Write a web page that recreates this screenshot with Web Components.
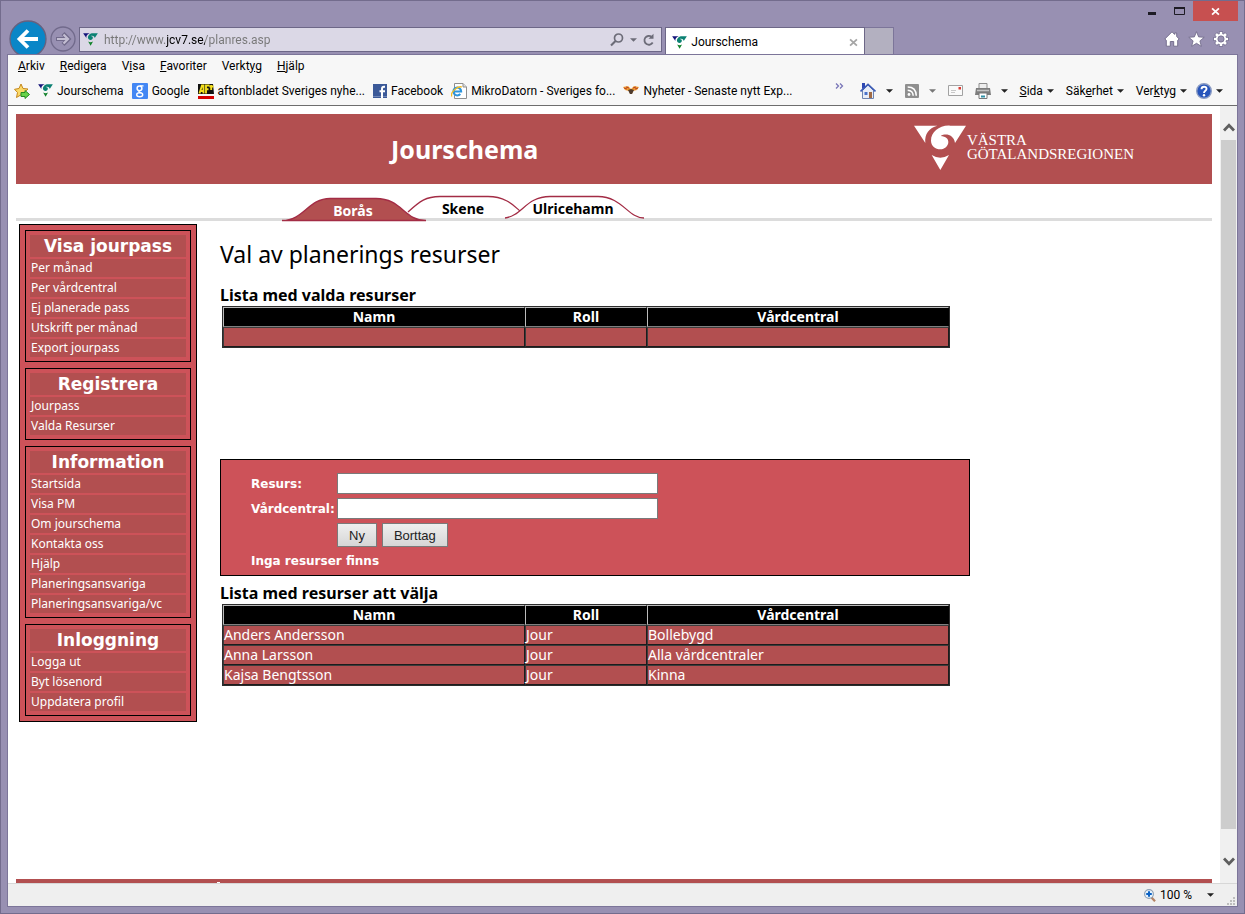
<!DOCTYPE html>
<html lang="sv">
<head>
<meta charset="utf-8">
<meta name="viewport" content="width=device-width, initial-scale=1">
<title>Jourschema</title>
<style>
  html, body { height: 100%; }
  body { margin: 0; font-family: Roboto, "Open Sans", sans-serif; font-size: 12px; color: #000; }
</style>
</head>
<body>
<browser-window>
  <window-controls slot="controls"></window-controls>
  <navigation-bar slot="nav"></navigation-bar>
  <menu-bar slot="bars"></menu-bar>
  <favorites-bar slot="bars"></favorites-bar>
  <page-view>
    <site-header></site-header>
    <site-tabs></site-tabs>
    <page-columns>
      <side-menu slot="side">
        <menu-group heading="Visa jourpass" items="Per månad|Per vårdcentral|Ej planerade pass|Utskrift per månad|Export jourpass"></menu-group>
        <menu-group heading="Registrera" items="Jourpass|Valda Resurser"></menu-group>
        <menu-group heading="Information" items="Startsida|Visa PM|Om jourschema|Kontakta oss|Hjälp|Planeringsansvariga|Planeringsansvariga/vc"></menu-group>
        <menu-group heading="Inloggning" items="Logga ut|Byt lösenord|Uppdatera profil"></menu-group>
      </side-menu>
      <page-title>Val av planerings resurser</page-title>
      <resource-table class="chosen" heading="Lista med valda resurser" rows="||"></resource-table>
      <resource-form></resource-form>
      <resource-table heading="Lista med resurser att välja" rows="Anders Andersson|Jour|Bollebygd;Anna Larsson|Jour|Alla vårdcentraler;Kajsa Bengtsson|Jour|Kinna"></resource-table>
    </page-columns>
    <site-footer></site-footer>
  </page-view>
  <status-bar slot="status"></status-bar>
</browser-window>

<script>
const define = (name, render) => customElements.define(name, class extends HTMLElement {
  constructor() { super(); this.attachShadow({ mode: 'open' }); }
  connectedCallback() { this.shadowRoot.innerHTML = render(this); }
});

const ICONS = {
  region: ['0 0 156 138', '<path fill="var(--left,#fff)" d="M0 2H70C46 8 31 26 34 54Z"/><path fill="var(--right,#fff)" d="M156 2H108C76 0 51 22 51 47C51 62 64 73 79 73C92 73 103 63 103 51C103 42 96 34 80 33C95 24 119 29 123 54Z"/><path fill="var(--tip,#fff)" d="M53 90Q79 106 105 90L79 135Z"/>'],
  back: ['0 0 38 38', '<circle cx="19" cy="19" r="18" fill="#0a86c7" stroke="#66617f" stroke-width="1.3"/><path d="M29 19H12M19 10.500L10.500 19L19 27.500" fill="none" stroke="#fff" stroke-width="3.800"/>'],
  forward: ['0 0 26 26', '<circle cx="13" cy="13" r="12" fill="none" stroke="#716a8b" stroke-width="1.300"/><path d="M6 13H18M13 7.500L18.500 13L13 18.500" fill="none" stroke="#716a8b" stroke-width="4.200"/><path d="M7 13H17.500M13.500 8.500L18 13L13.500 17.500" fill="none" stroke="#c3bed2" stroke-width="2.200"/>'],
  search: ['0 0 14 14', '<circle cx="8.500" cy="5" r="4" fill="none" stroke="#6c6c78" stroke-width="1.700"/><path d="M5.500 8L1 12.500" stroke="#6c6c78" stroke-width="2.200"/>'],
  reload: ['0 0 12 14', '<path d="M9.700 9.500A4.400 4.400 0 1 1 8.500 3.800" fill="none" stroke="#6c6c78" stroke-width="1.800"/><path d="M5.500 5.800H10.500V.800Z" fill="#6c6c78"/>'],
  caret: ['0 0 8 4', '<path d="M0 0H8L4 4Z" fill="var(--caret,#222)"/>'],
  cross: ['0 0 10 10', '<path d="M1.200 1.500L8.800 8.500M8.800 1.500L1.200 8.500" stroke="currentColor" stroke-width="2" fill="none"/>'],
  min: ['0 0 9 9', '<path d="M0 6.500H8" stroke="#1d1b24" stroke-width="3"/>'],
  max: ['0 0 11 9', '<path d="M.5 1H10.500V7.500H.500Z" fill="none" stroke="#1d1b24"/><path d="M0 1H11" stroke="#1d1b24" stroke-width="2"/>'],
  home: ['0 0 16 16', '<path d="M8 .800L.800 8L2.300 9.300V15.200H6.300V10.500H9.700V15.200H13.700V9.300L15.200 8L12.700 5.500V2H10.700V3.500Z" fill="#fff" stroke="#6d6787" stroke-width=".9"/>'],
  star: ['0 0 17 16', '<path d="M8.500 .700L10.600 5.900L16.200 6.300L11.900 9.900L13.300 15.300L8.500 12.300L3.700 15.300L5.100 9.900L.800 6.300L6.400 5.900Z" fill="#fff" stroke="#6d6787" stroke-width=".8"/>'],
  gear: ['0 0 16 16', '<g stroke="#6d6787" stroke-width="4"><path d="M8 .500V15.500M.500 8H15.500M2.700 2.700L13.300 13.300M13.300 2.700L2.700 13.300"/></g><g stroke="#fff" stroke-width="2.600"><path d="M8 1V15M1 8H15M3 3L13 13M13 3L3 13"/></g><circle cx="8" cy="8" r="4.200" fill="#9890b2" stroke="#fff" stroke-width="2"/><circle cx="8" cy="8" r="3.100" fill="#9890b2" stroke="#6d6787" stroke-width=".7"/>'],
  addfav: ['0 0 16 16', '<path d="M7 1L9 5.500L14 6L10.500 9.500L11.500 14L7 11.800L2.500 14.500L3.500 9.500L.500 6.300L5 5.500Z" fill="#fbd968" stroke="#c4861b"/><path d="M7 9.500H11V7.500L15.500 11.500L11 15.500V13.500H7Z" fill="#68d34a" stroke="#258b22"/>'],
  google: ['0 0 16 16', '<rect width="16" height="16" rx="1" fill="#4387f4"/><circle cx="7.500" cy="5.300" r="2.400" fill="none" stroke="#fff" stroke-width="1.500"/><ellipse cx="7.700" cy="11.700" rx="3" ry="2" fill="none" stroke="#fff" stroke-width="1.400"/><path d="M8 2.800H11.500M7.500 7.700C6 8.500 7.500 9.300 9.500 10" fill="none" stroke="#fff" stroke-width="1.300"/>'],
  afton: ['0 0 16 16', '<path fill="#111" d="M0 1H15L16 11H0Z"/><path fill="none" stroke="#f4df1d" stroke-width="1.900" d="M1.500 10.500L4 2.500H5.500V10.500M2.500 8H5.500M8 10.500V2.500H11.500M8 6.300H10.500M13.200 2V7M11.500 3.500H15.500"/><path fill="#d50000" d="M0 13H16V16H0Z"/>'],
  face: ['0 0 14 14', '<path fill="#3b5998" d="M0 0H14V14H0Z"/><path fill="#6f86b7" d="M0 12H14V13H0Z"/><path d="M12 2.700H11Q9 2.700 9 5V14M6.500 7.300H12" fill="none" stroke="#fff" stroke-width="2"/>'],
  iepage: ['0 0 16 16', '<path d="M3.500 .5H12L15.500 4V15.500H3.500Z" fill="#fff" stroke="#8f8f8f"/><path d="M12 .5V4H15.500" fill="#ddd" stroke="#8f8f8f"/><path d="M3 8.500H10.200A3.900 3.900 0 1 0 9.300 11" fill="none" stroke="#2b94dd" stroke-width="2"/><path d="M.8 13.500C-1 10 6 2.500 11 4" fill="none" stroke="#f3bc23" stroke-width="1.300"/>'],
  wasp: ['0 0 16 9', '<path d="M0 1L5 0L8 3L11 0L16 1L14 4L10 5L9 8H7L6 5L2 4Z" fill="#f09a30"/><path d="M1 2L4 3M3 1L6 2M10 2L13 1M12 3L15 2" fill="none" stroke="#b5472a"/><path d="M5 4L8 3L11 4L9 8H7Z" fill="#4f3b2c"/>'],
  house: ['0 0 16 16', '<path d="M2.500 7.500L8 2L13.500 7.500V15.500H2.500Z" fill="#e8edf7" stroke="#6d83b0"/><path d="M.500 8.500L8 1.500L15.500 8.500" fill="none" stroke="#3e5db6" stroke-width="1.700"/><path d="M2 0H5V4L2 6Z" fill="#2e48b3"/><path d="M4.500 9H7.500V12H4.500Z" fill="#4a72c9"/><path d="M9 9H12V15H9Z" fill="#a06a45"/>'],
  rss: ['0 0 14 14', '<rect width="14" height="14" rx="1" fill="#8f8f8f"/><circle cx="4" cy="10.500" r="1.400" fill="#fff"/><path d="M2.700 6.200Q8 6.500 8.200 11.700M2.700 3Q11 3 11.300 11.700" fill="none" stroke="#fff" stroke-width="1.500"/>'],
  mail: ['0 0 15 11', '<path d="M.5 .5H14.500V10.500H.500Z" fill="#fafafa" stroke="#a2a2a2"/><path d="M10.500 2H13V4.500H10.500Z" fill="#dc3b31"/><path d="M3 5.500H8M3 7.500H7" stroke="#c8c8c8"/>'],
  printer: ['0 0 16 16', '<path d="M4 .5H12V7H4Z" fill="#eee" stroke="#8d8d8d"/><path d="M1 5H15L16 12H0Z" fill="#7d7d7d"/><path d="M2 7.500H14" stroke="#c4c4c4" stroke-width="1.500"/><path d="M4 10H12V15.500H4Z" fill="#fff" stroke="#777"/><path d="M6 13.500H10" stroke="#2f8fa5" stroke-width="2"/>'],
  help: ['0 0 16 16', '<circle cx="8" cy="8" r="7.300" fill="#2755bb" stroke="#8b9cc4" stroke-width="1.400"/><path d="M5.500 6.200C5.500 2.800 10.800 3 10.500 6C10.300 7.800 8 7.700 8 10" fill="none" stroke="#fff" stroke-width="1.900"/><circle cx="8" cy="12.200" r="1.200" fill="#fff"/>'],
  chevrons: ['0 0 9 6', '<path d="M1 .500L3.500 3L1 5.500M5 .500L7.500 3L5 5.500" fill="none" stroke="#7a76b8" stroke-width="1.300"/>'],
  up: ['0 0 12 9', '<path d="M1 7.500L6 2.300L11 7.500" fill="none" stroke="#5e5e5e" stroke-width="2.800"/>'],
  down: ['0 0 12 9', '<path d="M1 1.500L6 6.700L11 1.500" fill="none" stroke="#5e5e5e" stroke-width="2.800"/>'],
  zoom: ['0 0 12 13', '<path d="M7.500 8.500L11 12.300" stroke="#b48163" stroke-width="2.200"/><circle cx="5" cy="5" r="4.400" fill="#e5f2fd" stroke="#8d9fb2" stroke-width="1.100"/><path d="M5 2.200V7.800M2.200 5H7.800" stroke="#0b62c4" stroke-width="2"/>'],
  grip: ['0 0 9 9', '<path d="M6 0H8V2H6ZM3 3H5V5H3ZM6 3H8V5H6ZM0 6H2V8H0ZM3 6H5V8H3ZM6 6H8V8H6Z" fill="#bdbdbd"/>']
};

customElements.define('ui-icon', class extends HTMLElement {
  constructor() { super(); this.attachShadow({ mode: 'open' }); }
  connectedCallback() {
    const [box, art] = ICONS[this.getAttribute('name')];
    const [, , w, h] = box.split(' ');
    const width = this.getAttribute('w') || w;
    const height = Math.round(width * h / w);
    this.shadowRoot.innerHTML = `<style>:host{display:inline-flex;flex:none}svg{display:block}</style>
      <svg width="${width}" height="${height}" viewBox="${box}" aria-hidden="true">${art}</svg>`;
  }
});

const RESET = `*,:host{box-sizing:border-box} button{font:inherit;color:inherit;background:none;border:0;padding:0;margin:0;display:inline-flex;align-items:center;white-space:nowrap} a{color:inherit;text-decoration:none}
  .fav{--left:#14147a;--right:#0b8173;--tip:#12822b}`;

define('browser-window', () => `<style>${RESET}
  :host{display:flex;flex-direction:column;height:100vh;min-height:600px;background:#9890b2;border:1px solid #736c8d;padding:0 6px 6px}
  .body{flex:1;min-height:0;display:flex;flex-direction:column;position:relative;z-index:1;background:#f7f7f7;border:1px solid #7c7599}
  </style><slot name="controls"></slot><slot name="nav"></slot>
  <div class="body"><slot name="bars"></slot><slot></slot><slot name="status"></slot></div>`);

define('window-controls', () => `<style>${RESET}
  :host{display:flex;justify-content:flex-end;height:20px;flex:none}
  button{justify-content:center;width:27px;height:20px}
  .close{width:45px;background:#c75050;color:#fff}
  </style><button aria-label="Minimera"><ui-icon name="min"></ui-icon></button><button aria-label="Maximera"><ui-icon name="max"></ui-icon></button><button class="close" aria-label="Stäng"><ui-icon name="cross" w="9"></ui-icon></button>`);

define('navigation-bar', () => `<style>${RESET}
  :host{display:flex;height:33px;flex:none;padding:0 9px 0 2px}
  .nav{display:flex;align-items:center;gap:3px;height:36px;margin-right:3px;flex:none}
  .address{flex:583 1 0;min-width:160px;display:flex;align-items:center;gap:6px;height:25px;margin:6px 3px 0 0;padding:0 6px 0 3px;background:#dbd8e6;border:1px solid #6d6787;--caret:#6c6c78}
  input{flex:1;min-width:0;border:0;padding:0;outline:0;font:12px/20px Roboto,sans-serif;color:#777;-webkit-text-fill-color:transparent;background:linear-gradient(90deg,#777 62px,#000 62px,#000 101px,#777 101px);-webkit-background-clip:text;background-clip:text}
  .tab{width:200px;flex:none;display:flex;align-items:center;gap:4px;margin-top:6px;padding:2px 6px 0;background:#fff;border:1px solid #6d6787;border-bottom:0}
  .tab span{flex:1}.tab button{color:#a5a5a5}
  .new{width:29px;flex:none;margin-top:6px;background:#b3b0c0;border:1px solid #7c7599;border-width:1px 1px 0 0}
  .tools{flex:341 1 0;display:flex;justify-content:flex-end;align-items:center;gap:8px;padding-top:2px}
  </style>
  <div class="nav"><button aria-label="Bakåt"><ui-icon name="back"></ui-icon></button><button aria-label="Framåt"><ui-icon name="forward"></ui-icon></button></div>
  <div class="address"><ui-icon class="fav" name="region" w="15"></ui-icon><input aria-label="Adress" value="http://www.jcv7.se/planres.asp">
    <button aria-label="Sök"><ui-icon name="search"></ui-icon></button><button aria-label="Visa förslag"><ui-icon name="caret" w="7"></ui-icon></button><button aria-label="Uppdatera"><ui-icon name="reload"></ui-icon></button></div>
  <div class="tab"><ui-icon class="fav" name="region" w="15"></ui-icon><span>Jourschema</span><button aria-label="Stäng flik"><ui-icon name="cross" w="9"></ui-icon></button></div>
  <button class="new" aria-label="Ny flik"></button>
  <div class="tools"><button aria-label="Start"><ui-icon name="home"></ui-icon></button><button aria-label="Favoriter"><ui-icon name="star"></ui-icon></button><button aria-label="Inställningar"><ui-icon name="gear"></ui-icon></button></div>`);

define('menu-bar', () => `<style>${RESET}
  :host{display:flex;gap:15px;height:21px;flex:none;padding:0 10px;align-items:center}
  </style><button><span><u>A</u>rkiv</span></button><button><span><u>R</u>edigera</span></button><button><span>V<u>i</u>sa</span></button><button><span><u>F</u>avoriter</span></button><button><span>Verkt<u>y</u>g</span></button><button><span><u>H</u>jälp</span></button>`);

define('favorites-bar', () => `<style>${RESET}
  :host{display:flex;height:30px;flex:none;padding:0 14px 0 6px;align-items:center;border-bottom:1px solid #6d6d6d;justify-content:space-between}
  div{display:flex;align-items:center}
  .links{gap:8px} a{display:flex;align-items:center;gap:4px;white-space:nowrap}
  .cmd,.menus{gap:12px} button{gap:4px} .wide{gap:10px}.tail{gap:9px}
  .more{align-self:flex-start;margin:0 4px 0 0}
  .off{--caret:#777}
  </style>
  <div class="links"><button aria-label="Lägg till i Favoriter"><ui-icon name="addfav"></ui-icon></button>
    <a href="#"><ui-icon class="fav" name="region" w="15"></ui-icon>Jourschema</a>
    <a href="#"><ui-icon name="google"></ui-icon>Google</a>
    <a href="#"><ui-icon name="afton"></ui-icon>aftonbladet Sveriges nyhe...</a>
    <a href="#"><ui-icon name="face"></ui-icon>Facebook</a>
    <a href="#"><ui-icon name="iepage"></ui-icon>MikroDatorn - Sveriges fo...</a>
    <a href="#"><ui-icon name="wasp"></ui-icon>Nyheter - Senaste nytt Exp...</a></div>
  <div class="cmd"><button class="more" aria-label="Fler favoriter"><ui-icon name="chevrons"></ui-icon></button>
    <button class="wide" aria-label="Startsida"><ui-icon name="house"></ui-icon><ui-icon name="caret" w="7"></ui-icon></button>
    <button class="wide off" aria-label="Feeds"><ui-icon name="rss"></ui-icon><ui-icon name="caret" w="7"></ui-icon></button>
    <button aria-label="Läs e-post"><ui-icon name="mail"></ui-icon></button>
    <button class="wide" aria-label="Skriv ut"><ui-icon name="printer"></ui-icon><ui-icon name="caret" w="7"></ui-icon></button>
    <div class="tail"><div class="menus">
      <button><span><u>S</u>ida</span><ui-icon name="caret" w="7"></ui-icon></button>
      <button><span>Säk<u>e</u>rhet</span><ui-icon name="caret" w="7"></ui-icon></button>
      <button><span>Ver<u>k</u>tyg</span><ui-icon name="caret" w="7"></ui-icon></button></div>
      <button aria-label="Hjälp"><ui-icon name="help"></ui-icon><ui-icon name="caret" w="7"></ui-icon></button></div></div>`);

define('page-view', () => `<style>${RESET}
  :host{display:flex;flex:1;min-height:0;background:#fff;font-family:"Noto Sans","Open Sans",sans-serif}
  .page{flex:1;min-width:0;overflow:hidden;display:flex;flex-direction:column;padding:8px 8px 0}
  .bar{width:17px;flex:none;background:#f0f0f0;display:flex;flex-direction:column;align-items:center;padding:17px 0}
  .track{flex:1;width:15px;margin:8px 0 28px;background:#cdcdcd}
  </style><div class="page"><slot></slot></div>
  <div class="bar"><ui-icon name="up"></ui-icon><div class="track"></div><ui-icon name="down"></ui-icon></div>`);

define('site-header', () => `<style>${RESET}
  :host{display:flex;justify-content:space-between;align-items:center;flex:none;height:70px;padding:0 78px 0 375px;background:#b24f50;color:#fff}
  h1{margin:0;font:bold 25px "Noto Sans",sans-serif}
  .logo{display:flex;gap:1px;font:15px/14px "Liberation Serif",serif;margin-bottom:3px}
  .logo span{padding-top:8px}
  </style><h1>Jourschema</h1><div class="logo"><ui-icon name="region" w="52"></ui-icon><span>VÄSTRA<br>GÖTALANDSREGIONEN</span></div>`);

define('site-tabs', () => `<style>${RESET}
  :host{display:block;position:relative;flex:none;height:37px;border-bottom:3px solid #dcdcdc}
  svg{position:absolute;left:264px;top:10px}
  nav{position:relative;display:grid;grid-template-columns:repeat(3,110px);margin-left:282px;padding-top:14px;font:bold 14px/22px "Noto Sans",sans-serif;text-align:center}
  .on{color:#fff;padding-top:2px}
  </style>
  <svg width="366" height="28" viewBox="0 0 366 28" aria-hidden="true"><g stroke="#a32c45" stroke-width="1.300">
    <path fill="#fff" stroke="none" d="M128 18C140 7 146 2.500 160 2.500H208C226 2.500 234 12 241 18L230 24H135Z"/>
    <path fill="none" d="M128 18C140 7 146 2.500 160 2.500H208C226 2.500 234 12 240 17"/>
    <path fill="#fff" d="M225 24C242 22 246 2.500 270 2.500H318C342 2.500 348 24 364 24"/>
    <path fill="#b24f50" d="M2 26.500C24 26.500 28 4.500 50 4.500H96C122 4.500 124 26.500 146 26.500Z"/></g></svg>
  <nav><a class="on" href="#">Borås</a><a href="#">Skene</a><a href="#">Ulricehamn</a></nav>`);

define('page-columns', () => `<style>${RESET}
  :host{display:flex;align-items:flex-start;gap:23px;flex:none;padding:3px 0 0 3px}
  main{flex:1;min-width:0}
  ::slotted(.chosen){min-height:175px}
  </style><slot name="side"></slot><main><slot></slot></main>`);

define('side-menu', () => `<style>
  :host{display:flex;flex-direction:column;gap:6px;box-sizing:border-box;width:178px;flex:none;padding:5px;background:#cd5259;border:1px solid #000}
  </style><slot></slot>`);

define('menu-group', el => `<style>${RESET}
  :host{display:grid;gap:2px;padding:4px;border:1px solid #000;color:#fff}
  h2{margin:0;background:#b24f50;font:bold 17px/22px "DejaVu Sans",sans-serif;text-align:center}
  a{display:block;padding-left:1px;background:#b24f50;font:12px/18px "Noto Sans",sans-serif}
  </style><h2>${el.getAttribute('heading')}</h2>${el.getAttribute('items').split('|').map(t => `<a href="#">${t}</a>`).join('')}`);

define('page-title', () => `<style>:host{display:block}h1{margin:0;padding:14px 0;font:23px/32px "Noto Sans",sans-serif}</style><h1><slot></slot></h1>`);

define('resource-table', el => `<style>${RESET}
  :host{display:block}
  h2{margin:0;font:bold 16px/22px "Noto Sans",sans-serif}
  table{width:728px;max-width:100%;margin:0 0 0 2px;border:1px solid #2c2c2c;border-spacing:0;table-layout:fixed}
  th,td{height:20px;padding:0;border:1px solid;font-size:14px;line-height:18px}
  th{background:#000;color:#fff;border-color:#bbb #000 #808080 #bbb}
  td{background:#b24f50;color:#fff;border-color:#3c3c3c #1c1c1c #1c1c1c #3c3c3c}
  .role{width:122px}
  </style><h2>${el.getAttribute('heading')}</h2>
  <table><thead><tr><th scope="col">Namn</th><th scope="col" class="role">Roll</th><th scope="col">Vårdcentral</th></tr></thead>
  <tbody>${el.getAttribute('rows').split(';').map(r => `<tr>${r.split('|').map(c => `<td>${c}</td>`).join('')}</tr>`).join('')}</tbody></table>`);

define('resource-form', () => `<style>${RESET}
  :host{display:block}
  form{width:750px;max-width:100%;margin:0 0 6px;padding:13px 30px 4px;display:grid;grid-template-columns:83px 321px;column-gap:3px;row-gap:4px;align-items:center;background:#cd5259;border:1px solid #000;color:#fff;font:bold 12px/20px "DejaVu Sans",sans-serif}
  label{white-space:nowrap}
  input{width:100%;height:21px;border:1px solid #7a7a7a;background:#fff;padding:0 2px}
  .actions{grid-column:2;display:flex;gap:5px}
  button{height:24px;padding:0 11px;font:13px "Liberation Sans",sans-serif;color:#222;background:linear-gradient(#efefef,#d6d6d6);border:1px solid #7a7a7a}
  p{grid-column:1/-1;margin:0}
  </style><form><label for="r">Resurs:</label><input id="r" type="text"><label for="v">Vårdcentral:</label><input id="v" type="text">
  <div class="actions"><button type="button">Ny</button><button type="button">Borttag</button></div><p>Inga resurser finns</p></form>`);

define('site-footer', () => `<style>
  :host{display:block;flex:none;height:4px;margin-top:auto;background:#b24f50}
  div{width:3px;margin-left:201px;padding-top:3px;border-bottom:1px solid #fff}
  </style><div></div>`);

define('status-bar', () => `<style>${RESET}
  :host{display:flex;justify-content:flex-end;align-items:center;flex:none;height:23px;padding:0 1px;background:#efefef;border-top:1px solid #d7d7d7}
  button{gap:4px}.arrow{margin:0 13px 0 15px}ui-icon[name=grip]{align-self:flex-end}
  </style><button><ui-icon name="zoom"></ui-icon><span>100 %</span></button><button class="arrow" aria-label="Ändra zoomnivå"><ui-icon name="caret" w="7"></ui-icon></button><ui-icon name="grip"></ui-icon>`);
</script>
</body>
</html>
